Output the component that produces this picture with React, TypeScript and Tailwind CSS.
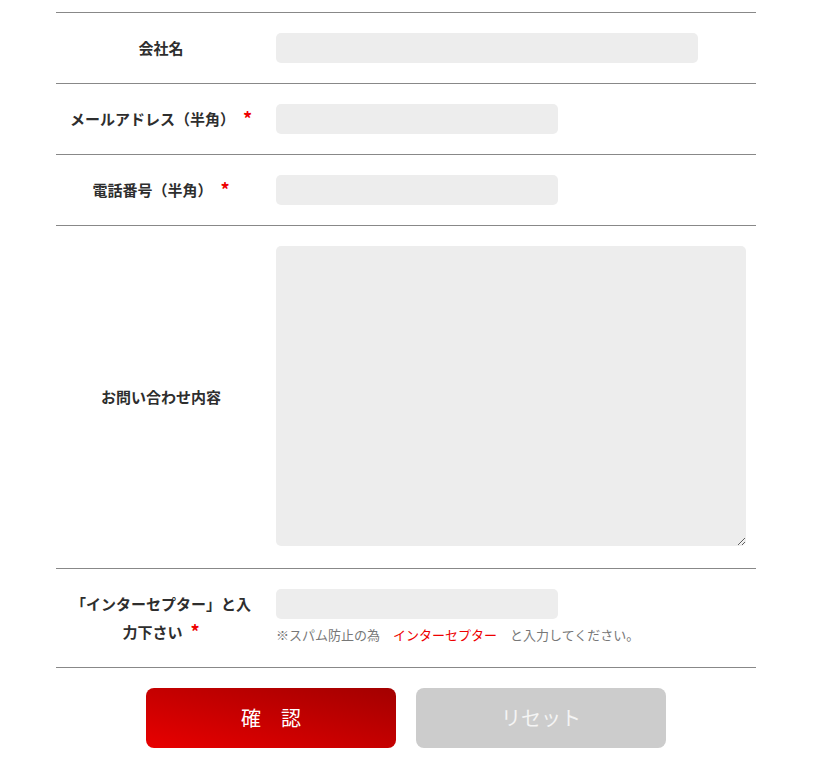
const font = { fontFamily: '"Noto Sans CJK JP", "Noto Sans", sans-serif' };

const Required = () => (
  <span className="ml-[8px] text-[18px] font-bold leading-none text-[#ee0000] relative top-[1px]">*</span>
);

const Row = ({ label, children }: { label: React.ReactNode; children: React.ReactNode }) => (
  <div className="flex border-b border-[#888888]">
    <div className="w-[210px] px-[10px] flex items-center justify-center text-center text-[15px] font-bold leading-[28px] text-[#2e2e2e]">
      <div>{label}</div>
    </div>
    <div className="flex-1 pl-[10px] pt-[20px] pb-[20px]">{children}</div>
  </div>
);

const inputCls = "block h-[30px] rounded-[5px] bg-[#ededed] outline-none px-2 text-[14px]";

export default function App() {
  return (
    <div className="w-[812px] bg-white pt-[12px] pb-[17px]" style={font}>
      <div className="mx-auto w-[700px] border-t border-[#888888]">
        <Row label="会社名">
          <input className={`${inputCls} w-[422px]`} />
        </Row>
        <Row
          label={
            <>
              メールアドレス（半角）
              <Required />
            </>
          }
        >
          <input className={`${inputCls} w-[282px]`} />
        </Row>
        <Row
          label={
            <>
              電話番号（半角）
              <Required />
            </>
          }
        >
          <input className={`${inputCls} w-[282px]`} />
        </Row>
        <Row label="お問い合わせ内容">
          <textarea className="block w-[470px] h-[300px] mb-[2px] rounded-[5px] bg-[#ededed] outline-none p-2 text-[14px]" />
        </Row>
        <Row
          label={
            <>
              「インターセプター」と入力下さい
              <Required />
            </>
          }
        >
          <input className={`${inputCls} w-[282px]`} />
          <p className="mt-[3px] text-[13px] leading-[25px] text-[#777777]">
            ※スパム防止の為　<span className="text-[#ee0000]">インターセプター</span>　と入力してください。
          </p>
        </Row>
        <div className="mt-[20px] flex justify-center gap-[20px]">
          <button className="w-[250px] h-[60px] rounded-[8px] bg-gradient-to-tr from-[#e80000] to-[#a30000] text-white text-[20px]">
            確　認
          </button>
          <button className="w-[250px] h-[60px] rounded-[8px] bg-[#cccccc] text-[#f4f4f4] text-[20px]">
            リセット
          </button>
        </div>
      </div>
    </div>
  );
}
